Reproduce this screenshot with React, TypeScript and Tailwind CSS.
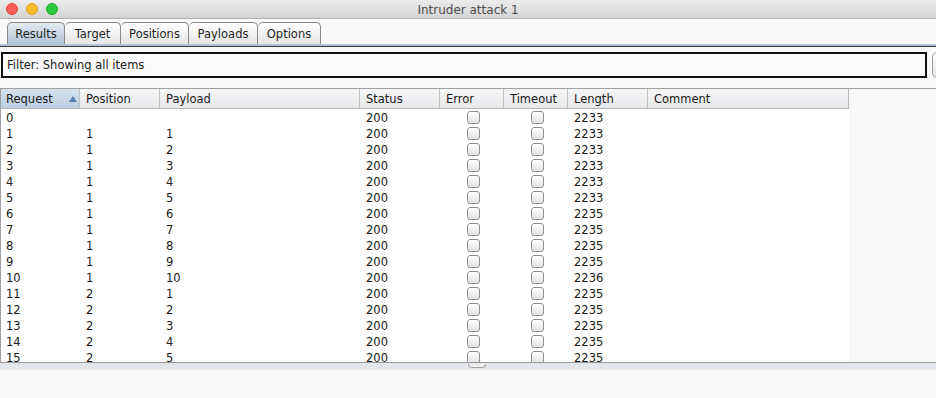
import React from "react";

const rows: [string, string, string, string, string][] = [
  ["0", "", "", "200", "2233"],
  ["1", "1", "1", "200", "2233"],
  ["2", "1", "2", "200", "2233"],
  ["3", "1", "3", "200", "2233"],
  ["4", "1", "4", "200", "2233"],
  ["5", "1", "5", "200", "2233"],
  ["6", "1", "6", "200", "2235"],
  ["7", "1", "7", "200", "2235"],
  ["8", "1", "8", "200", "2235"],
  ["9", "1", "9", "200", "2235"],
  ["10", "1", "10", "200", "2236"],
  ["11", "2", "1", "200", "2235"],
  ["12", "2", "2", "200", "2235"],
  ["13", "2", "3", "200", "2235"],
  ["14", "2", "4", "200", "2235"],
  ["15", "2", "5", "200", "2235"],
];

const tabs = [
  { name: "Results", w: "w-[58px]", active: true },
  { name: "Target", w: "w-[56px]", active: false },
  { name: "Positions", w: "w-[68px]", active: false },
  { name: "Payloads", w: "w-[69px]", active: false },
  { name: "Options", w: "w-[63px]", active: false },
];

function Check() {
  return (
    <div className="w-[13px] h-[13px] rounded-[3px] border border-[#8e8e8e] bg-linear-to-b from-white to-[#e2e2e2] shadow-[inset_0_1px_0_#ffffff]" />
  );
}

export default function App() {
  return (
    <div className="w-[936px] h-[398px] overflow-hidden bg-[#fafafa] flex flex-col font-['DejaVu_Sans',sans-serif] text-[11.5px] text-[#1a1a1a]">
      {/* Title bar */}
      <div className="h-[19px] shrink-0 border-b border-[#b0b0b0] bg-linear-to-b from-[#ececec] to-[#d5d5d5] flex items-center relative">
        <div className="flex gap-[8px] pl-[6px]">
          <div className="w-[12px] h-[12px] rounded-full bg-[#fc5f57] border border-[#e0443e]" />
          <div className="w-[12px] h-[12px] rounded-full bg-[#fdbc2e] border border-[#dea123]" />
          <div className="w-[12px] h-[12px] rounded-full bg-[#28c840] border border-[#1aab29]" />
        </div>
        <div className="absolute inset-0 flex items-center justify-center pt-[1px] text-[12px] text-[#4d4d4d]">
          Intruder attack 1
        </div>
      </div>

      {/* Tabs */}
      <div className="h-[25px] shrink-0 pt-[3px] pl-[7px] flex items-end">
        {tabs.map((t, i) => (
          <div
            key={t.name}
            className={`${t.w} h-[22px] flex items-center justify-center pt-[2px] rounded-t-[5px] border-t border-r border-[#8a8a8a] ${
              i === 0 ? "border-l" : ""
            } ${
              t.active
                ? "bg-linear-to-b from-[#e3eaf2] to-[#b1c4d8]"
                : "bg-linear-to-b from-white to-[#e6e6e6]"
            } text-[#1f1f1f]`}
          >
            {t.name}
          </div>
        ))}
      </div>
      <div className="h-[2px] shrink-0 bg-[#b4c3d6]" />
      <div className="h-px shrink-0 bg-[#3a3a3a]" />

      {/* Filter */}
      <div className="h-[5px] shrink-0" />
      <div className="h-[26px] shrink-0 flex">
        <div className="ml-[1px] w-[926px] shrink-0 h-[26px] border-2 border-[#111] bg-[#fbfbfb] flex items-center pl-[4px] pt-[2px]">
          Filter: Showing all items
        </div>
        <div className="ml-[5px] w-[14px] shrink-0 h-[26px] rounded-l-[5px] border border-[#9c9c9c] bg-linear-to-b from-white to-[#e4e4e4]" />
      </div>
      <div className="h-[10px] shrink-0" />

      {/* Table pane */}
      <div className="h-[275px] shrink-0 border-t border-l border-[#a0a0a0] flex flex-col bg-[#f8f8f8]">
        {/* Header */}
        <div className="h-[20px] shrink-0 flex">
          <div className="w-[848px] flex border-b border-r border-[#b7b7b7] bg-linear-to-b from-[#f6f6f6] to-[#e6e8eb]">
            <div className="w-[79px] shrink-0 flex items-center pl-[5px] pt-[2px] border-r border-[#c2c2c2] bg-linear-to-b from-[#d5e1ee] to-[#bccee2] relative">
              Request
              <svg className="absolute left-[68px] top-[7px]" width="8" height="6" viewBox="0 0 8 6">
                <polygon points="4,0 8,6 0,6" fill="#5a80b0" />
              </svg>
            </div>
            <div className="w-[80px] shrink-0 flex items-center pl-[6px] pt-[2px] border-r border-[#c2c2c2]">Position</div>
            <div className="w-[200px] shrink-0 flex items-center pl-[6px] pt-[2px] border-r border-[#c2c2c2]">Payload</div>
            <div className="w-[80px] shrink-0 flex items-center pl-[6px] pt-[2px] border-r border-[#c2c2c2]">Status</div>
            <div className="w-[64px] shrink-0 flex items-center pl-[6px] pt-[2px] border-r border-[#c2c2c2]">Error</div>
            <div className="w-[64px] shrink-0 flex items-center pl-[6px] pt-[2px] border-r border-[#c2c2c2]">Timeout</div>
            <div className="w-[80px] shrink-0 flex items-center pl-[6px] pt-[2px] border-r border-[#c2c2c2]">Length</div>
            <div className="flex-1 flex items-center pl-[6px] pt-[2px]">Comment</div>
          </div>
        </div>
        {/* Body */}
        <div className="h-[253px] overflow-hidden">
          <div className="w-[848px] bg-white">
            {rows.map((r) => (
              <div key={r[0]} className="h-[16px] flex items-center">
                <div className="w-[79px] shrink-0 pl-[5px] pt-[3px]">{r[0]}</div>
                <div className="w-[80px] shrink-0 pl-[6px] pt-[3px]">{r[1]}</div>
                <div className="w-[200px] shrink-0 pl-[6px] pt-[3px]">{r[2]}</div>
                <div className="w-[80px] shrink-0 pl-[6px] pt-[3px]">{r[3]}</div>
                <div className="w-[64px] shrink-0 flex justify-center pl-[2px]">
                  <Check />
                </div>
                <div className="w-[64px] shrink-0 flex justify-center pl-[2px]">
                  <Check />
                </div>
                <div className="w-[80px] shrink-0 pl-[6px] pt-[3px]">{r[4]}</div>
                <div className="flex-1" />
              </div>
            ))}
          </div>
        </div>
        <div className="h-px shrink-0 bg-[#9a9a9a]" />
      </div>

      {/* Split divider */}
      <div className="h-[7px] shrink-0 bg-[#e3e6eb] flex pl-[468px]">
        <div className="w-[18px] h-[4px] mt-[1px] rounded-b-[4px] border-b border-l border-r border-[#a5a5a5] bg-[#eeeeee]" />
      </div>
      <div className="flex-1 bg-[#f9f9f9]" />
    </div>
  );
}
